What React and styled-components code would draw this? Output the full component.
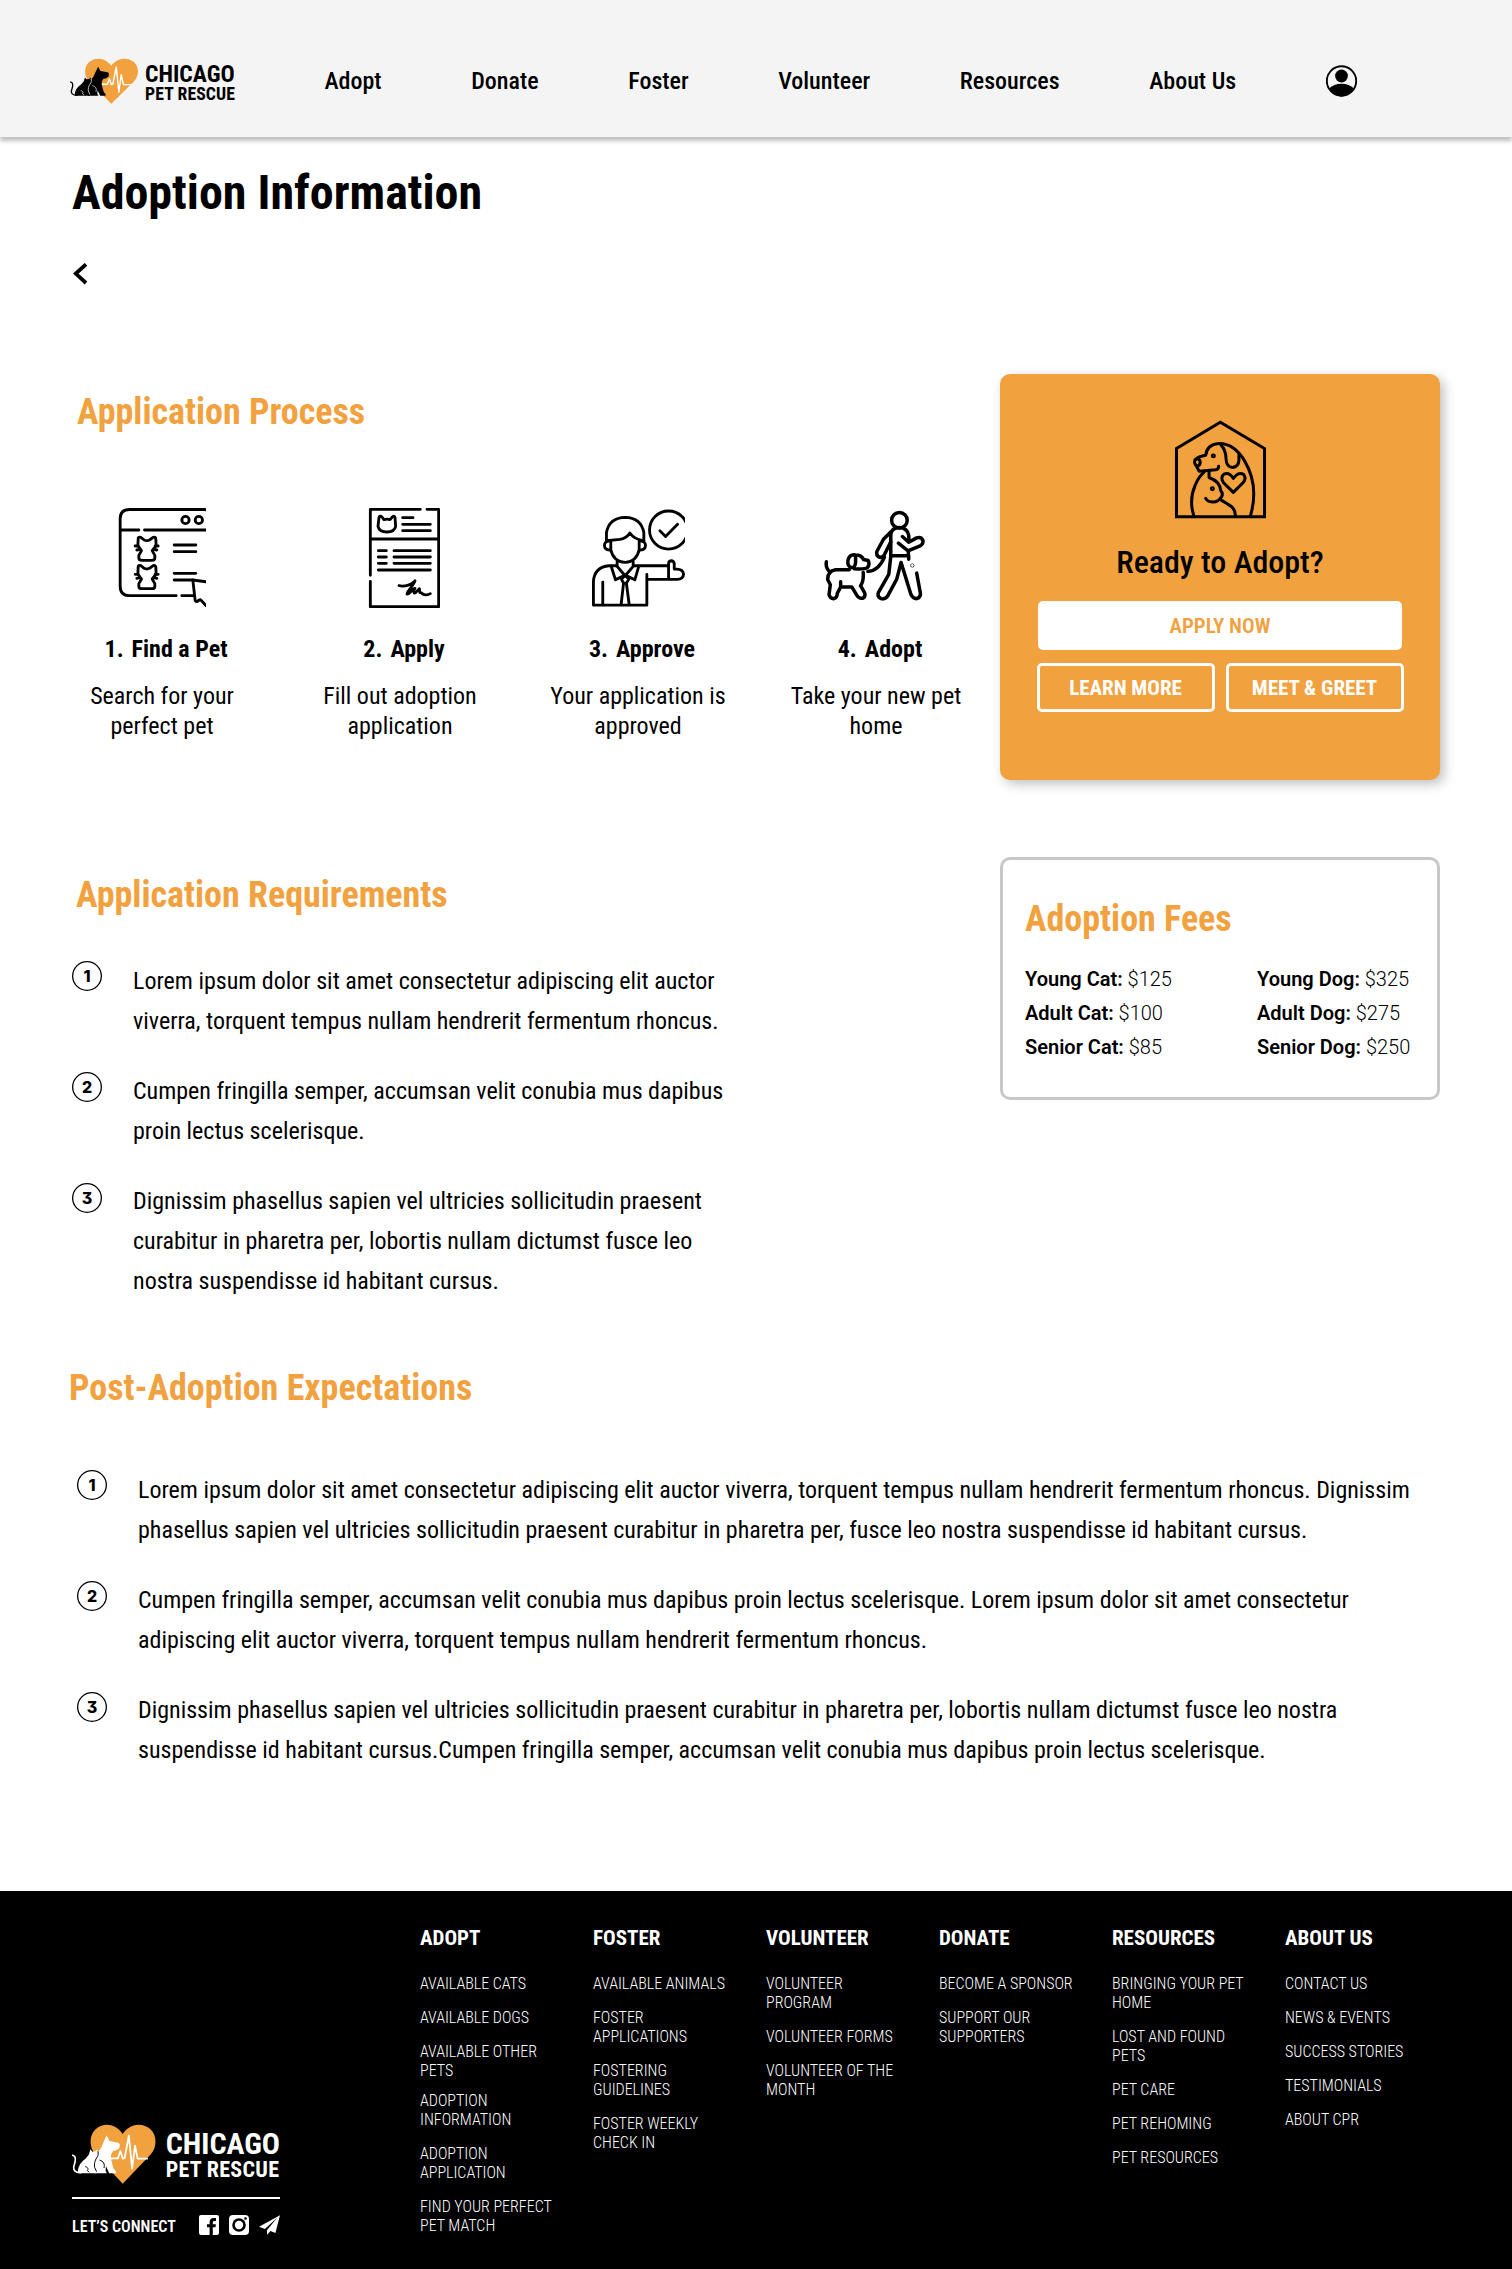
import React from "react";
import styled, { createGlobalStyle } from "styled-components";

const ORANGE = "#f2a13f";

const GlobalStyle = createGlobalStyle`
  * { box-sizing: border-box; }
  body {
    margin: 0;
    background: #fff;
    color: #000;
    font-family: "Roboto Condensed", Roboto, "Liberation Sans", sans-serif;
    font-size: 24px;
    line-height: 28px;
  }
  h1, h2, h3, p, ul { margin: 0; padding: 0; }
  ul { list-style: none; }
  a { color: inherit; text-decoration: none; }
`;

/* ---------- layout ---------- */

const Page = styled.div`
  width: 1512px;
  height: 2269px;
  display: flex;
  flex-direction: column;
`;

const Header = styled.header`
  flex: none;
  height: 137px;
  padding: 25px 0 0 70px;
  display: flex;
  align-items: center;
  background: #f4f4f4;
  box-shadow: 0 4px 4px rgba(0, 0, 0, 0.25);
`;

const Nav = styled.nav`
  display: flex;
  align-items: center;
  gap: 89.6px;
  margin-left: 89.5px;
  font-weight: 500;
  white-space: nowrap;
`;

const Main = styled.main`
  flex: 1;
`;

const PageTitle = styled.h1`
  margin: 27px 0 0 72px;
  font-size: 48px;
  line-height: 57px;
  font-weight: 700;
`;

const BackLink = styled.a`
  display: block;
  width: 16px;
  height: 22px;
  margin: 42px 0 0 73px;
  svg { display: block; }
`;

const Columns = styled.div`
  display: grid;
  grid-template-columns: 1000px 440px;
  margin-top: 89px;
`;

const LeftColumn = styled.div`
  padding-top: 17px;
`;

const SectionTitle = styled.h2`
  margin: ${(p) => p.$top || 0}px 0 0 ${(p) => p.$indent || 0}px;
  color: ${ORANGE};
  font-size: 36px;
  line-height: 42px;
  font-weight: 700;
`;

/* ---------- logo ---------- */

const LogoBox = styled.a`
  width: ${(p) => (p.$large ? 208 : 165)}px;
  display: flex;
  align-items: flex-start;
`;

const LogoWords = styled.span`
  display: flex;
  flex-direction: column;
  font-weight: 700;
  white-space: nowrap;
  margin: ${(p) => (p.$large ? "8px 0 0 10px" : "6px 0 0 7px")};
`;

const LogoTop = styled.span`
  font-size: ${(p) => (p.$large ? 30.1 : 23.6)}px;
  line-height: ${(p) => (p.$large ? 24 : 20)}px;
`;

const LogoBottom = styled.span`
  margin-top: ${(p) => (p.$large ? 3 : 1)}px;
  font-size: ${(p) => (p.$large ? 22 : 17.7)}px;
  line-height: ${(p) => (p.$large ? 22 : 18)}px;
  letter-spacing: ${(p) => (p.$large ? 0.3 : 0.1)}px;
`;

function Logo({ large, ink, gap }) {
  return (
    <LogoBox href="#" $large={large}>
      <svg
        width={large ? 86 : 69}
        height={large ? 60 : 46}
        viewBox="65 130 259 180"
        preserveAspectRatio="none"
        fill="none"
      >
        <path
          d="M222 309 137 221C117 199 118 164 138 146c24-21 61-18 84 14 23-32 61-35 86-14 20 18 21 53 1 75Z"
          fill={ORANGE}
        />
        <path
          d="M178 233h29l8-22 7 23 6-2 13-67 10 99 9-69 8 39h32"
          stroke="#fff"
          strokeWidth="5.500"
          strokeLinejoin="round"
        />
        <path
          d="m172 164 9 17 27 5 5 4-1 12-9 7-11 2-6 11c-2 13 4 28 8 42l7 8-1 6h-20l-10-22-1 14 4 8h-38c-9-10-7-33 3-50 6-13 18-23 22-38Z"
          fill={ink}
        />
        <path
          d="m122 206 6 7 9-1 7-6 2 18-8 10-3 26 5 12-1 6H84c-3-16 7-33 22-43l11-13Z"
          fill={ink}
        />
        <path
          d="M92 276c-18 0-24-8-21-20 3-11 8-21 2-29l-6-3"
          stroke={ink}
          strokeWidth="5"
          strokeLinecap="round"
        />
        <path
          d="M145 212c2 6 2 13-4 20-5 8-8 18-6 28l6 13M106 258c6 0 11 6 7 12l5 5M150 238c13 4 17 12 14 24"
          stroke={gap}
          strokeWidth="3"
        />
      </svg>
      <LogoWords $large={large}>
        <LogoTop $large={large}>CHICAGO</LogoTop>
        <LogoBottom $large={large}>PET RESCUE</LogoBottom>
      </LogoWords>
    </LogoBox>
  );
}

/* ---------- icons ---------- */

const Line = styled.svg`
  display: block;
  flex: none;
  fill: none;
  stroke: #000;
  stroke-width: ${(p) => p.$weight || 8.5};
  stroke-linecap: round;
  stroke-linejoin: round;
`;

const Avatar = styled.svg`
  display: block;
`;

function UserIcon() {
  return (
    <Avatar width="32" height="32" viewBox="0 0 32 32">
      <circle cx="15.500" cy="16" r="14.700" fill="none" stroke="#000" strokeWidth="1.900" />
      <circle cx="15.500" cy="11" r="6.400" />
      <path d="M3.100 23.600C6.100 20.600 10.500 18.700 15.500 18.700s9.400 1.900 12.400 4.900C25.300 28.300 20.700 31.400 15.500 31.400S5.700 28.300 3.100 23.600Z" />
    </Avatar>
  );
}

function BrowseIcon() {
  const cat = (dy) => (
    <g transform={`translate(0 ${dy})`}>
      <path d="M234 508q-1-9 8-6l10 8q8 4 16 0l11-8q8-2 8 6l1 19-12 15 8 14v9q-1 6-8 6h-31q-8 0-9-6v-9l8-14-11-15Z" />
      <path d="M225 528h9M230 540l9-2M294 528h-9M290 540l-9-2" />
    </g>
  );
  return (
    <Line width="88" height="100" viewBox="174 411 263 300">
      <path d="M442 420 432 418.500H208q-28 0-28 28V648q0 29 28 29h140M365 677h37" />
      <path d="M183 480h53M253 480h190" />
      <circle cx="376" cy="450" r="11" />
      <circle cx="416" cy="450" r="11" />
      {cat(0)}
      {cat(85)}
      <path d="M342 525h65M342 545h65M342 610h65M342 630h54" />
      <path d="m442 636-44-6 7 62q5 6 9 0l7-3 20 22" />
    </Line>
  );
}

function FormIcon() {
  return (
    <Line width="72" height="101" viewBox="925 411 216 303">
      <path d="M1082 418H932v198M932 634v76h205V418h-35M932 507h205" />
      <path d="M958 442q2-6 8-2l7 9q9-3 18 0l8-9q6-4 7 3l2 26q-3 17-26 17t-27-17Z" />
      <path d="M1029 443h31M1029 463h83M1029 482h83M956 542h24M1003 542h109M956 561h24M1003 561h109M956 580h24M1003 580h109M956 600h156" />
      <path d="M1018 647c17 4 42-4 48-15-6 16-26 36-24 40 8 1 16-17 24-17-6 9-4 18 2 13l11-12c2 8-1 13 5 12 6 8 20 8 28 3" />
    </Line>
  );
}

function ApproveIcon() {
  return (
    <Line width="94" height="98.500" viewBox="214 88 281 295">
      <path d="M290 258h-22q-44 4-47 47v71h160v-92M249 307v67" />
      <path d="M342 258h104M384 299h88q18-1 19-16-2-15-20-15h-8v-17q-2-8-9-8-8 1-8 9v47" />
      <path d="M273 184v26q8 36 43 38 34-2 42-38v-26" />
      <path d="M260 184v-25q8-45 56-46 48 1 56 46v25" />
      <path d="m260 183 40-4q21-3 30-19 14 20 42 23" />
      <path d="M268 184q-14 1-14 13t16 14M363 184q14 1 14 13t-16 14" />
      <path d="M292 246v14l24 28 24-28v-14M275 262l12 38 29-14 29 14 11-38" />
      <path d="m305 298 11-11 11 11-7 12h-9ZM311 312l-7 62M320 312l8 62" />
      <circle cx="446" cy="151" r="57" />
      <path d="m420 153 17 17 36-36" />
    </Line>
  );
}

function WalkIcon() {
  return (
    <Line width="101" height="91" viewBox="912 90 304 274" $weight={10.5}>
      <circle cx="1139" cy="121" r="23.500" />
      <path d="M1113 228v-64q2-20 26-21 25 2 28 24l1 17M1113 228h54v10" />
      <path d="m1148 170 19 17 24-13q14-5 19 8 1 10-7 15l-38 16-29-23M1166 215v12" />
      <path d="m1113 156-22 22-20 37q-3 12 7 17 10 3 16-8l19-38" />
      <path d="m1113 230-6 54-31 54q-5 13 8 19 12 3 19-7l28-52 13-50 30 97q5 12 17 12 13-4 11-17l-11-60" />
      <circle cx="1178" cy="257" r="1" />
      <path d="M1094 232q-18 42-50 43" />
      <path d="M919 246q-3 20 12 31" />
      <path d="M988 270h-41q-24 3-24 29l8 16-4 30q3 12 14 12 11-2 11-16l10-19h34l15 25q8 12 19 8 8-5 4-16l-12-21q10-14 8-40M962 306v14" />
      <path d="M1007 228v20q-1 17-13 15-12-3-10-21 4-19 22-17 19 1 25 14l14 3q6 11-2 21-6 6-40 4" />
    </Line>
  );
}

function HouseIcon() {
  return (
    <Line width="93" height="99" viewBox="582 180 279 298" $weight={9}>
      <path d="m589 266 132-79 133 79v205H589Z" strokeLinejoin="miter" />
      <path d="M641 467q-15-46 4-90 10-25 27-40" />
      <path d="M645 299q10-9 32-13 4-32 39-35 46-1 78 52 44 74 18 164" />
      <path d="M652 297q-11 3-8 13 3 10 10 8 8-4 6-14-2-7-8-7M648 317l9 17 50-4q9-2 9-11" />
      <path d="M722 254q16 16 16 42 1 26 20 27 18-2 19-22v-17" />
      <circle cx="700" cy="288" r="3" />
      <circle cx="697" cy="387" r="3" />
      <path d="M687 334v19q33 12 35 39 9 10 2 20-9 16-27 15-15-1-20-11M725 422l18 11q24 12 23 34" />
      <path d="m760 398-30-30q-10-16 2-25 16-7 28 13 14-20 30-13 11 11 0 25Z" />
    </Line>
  );
}

/* ---------- process steps ---------- */

const Steps = styled.div`
  display: grid;
  grid-template-columns: repeat(4, 238px);
  margin: 74px 0 0 43px;
`;

const Step = styled.div`
  display: flex;
  flex-direction: column;
  align-items: center;
  text-align: center;
`;

const StepArt = styled.div`
  height: 128px;
  padding: ${(p) => p.$pad || 0};
`;

const StepTitle = styled.h3`
  display: flex;
  gap: 8px;
  padding-left: 8px;
  font-size: 24px;
  font-weight: 700;
`;

const StepText = styled.p`
  width: 190px;
  margin-top: 18px;
  line-height: 30px;
`;

/* ---------- numbered list ---------- */

const Numbered = styled.div`
  display: grid;
  grid-template-columns: 30px ${(p) => p.$width}px;
  column-gap: 31px;
  margin: ${(p) => p.$margin};
`;

const Markers = styled.div`
  display: flex;
  flex-direction: column;
  gap: 81px;
`;

const Marker = styled.span`
  width: 30px;
  height: 30px;
  border-radius: 50%;
  box-shadow: inset 0 0 0 1.3px #000;
  display: flex;
  align-items: center;
  justify-content: center;
  font-family: Inter, sans-serif;
  font-feature-settings: "cv09";
  font-size: 16px;
  line-height: 20px;
  font-weight: 800;
`;

const Items = styled.div`
  display: flex;
  flex-direction: column;
  gap: 30px;
  line-height: 40px;
`;

function NumberedList({ items, ...rest }) {
  return (
    <Numbered {...rest}>
      <Markers>
        {items.map((_, i) => (
          <Marker key={i}>{i + 1}</Marker>
        ))}
      </Markers>
      <Items>
        {items.map((t) => (
          <p key={t}>{t}</p>
        ))}
      </Items>
    </Numbered>
  );
}

/* ---------- sidebar ---------- */

const AdoptCard = styled.aside`
  height: 406px;
  padding: 46px 37px 0;
  border-radius: 10px;
  background: ${ORANGE};
  box-shadow: 4px 4px 12px rgba(0, 0, 0, 0.25);
  display: flex;
  flex-direction: column;
  align-items: center;
`;

const CardTitle = styled.h3`
  margin: 24px 0 20px;
  font-size: 32px;
  line-height: 38px;
  font-weight: 500;
`;

const Button = styled.button`
  height: 49px;
  padding: 0;
  border: 3px solid #fff;
  border-radius: 5px;
  background: ${(p) => (p.$solid ? "#fff" : "transparent")};
  color: ${(p) => (p.$solid ? ORANGE : "#fff")};
  font: ${(p) => (p.$solid ? 600 : 700)} 21px/24px "Roboto Condensed", Roboto, sans-serif;
  width: ${(p) => (p.$solid ? "364px" : "auto")};
`;

const ButtonRow = styled.div`
  width: 367px;
  margin-top: 13px;
  display: grid;
  grid-template-columns: 1fr 1fr;
  gap: 11px;
`;

const Fees = styled.aside`
  height: 243px;
  margin-top: 77px;
  padding: 38px 22px 0;
  border: 3px solid #c8c8c8;
  border-radius: 10px;
`;

const FeeGrid = styled.div`
  display: grid;
  grid-template-columns: 232px auto;
  margin-top: 22px;
  font-family: Roboto, sans-serif;
  font-size: 20px;
  line-height: 34px;
  font-weight: 300;
  white-space: nowrap;
  b { font-weight: 600; }
`;

/* ---------- footer ---------- */

const Footer = styled.footer`
  flex: none;
  height: 378px;
  display: flex;
  background: #000;
  color: #fff;
`;

const Brand = styled.div`
  width: 420px;
  padding: 0 0 34px 72px;
  display: flex;
  flex-direction: column;
  justify-content: flex-end;
`;

const Connect = styled.div`
  width: 208px;
  margin-top: 13px;
  padding-top: 16px;
  border-top: 2px solid #fff;
  display: flex;
  align-items: center;
  justify-content: space-between;
  font-size: 16px;
  line-height: 20px;
  font-weight: 600;
`;

const ConnectLabel = styled.span`
  padding-top: 3px;
  line-height: 17px;
`;

const Social = styled.div`
  display: flex;
  gap: 10px;
  svg { display: block; }
`;

const FooterColumns = styled.div`
  display: grid;
  grid-template-columns: repeat(6, 173px);
  padding-top: 35px;
`;

const FooterTitle = styled.h3`
  margin-bottom: 24px;
  font-size: 21px;
  line-height: 24px;
  font-weight: 700;
`;

const FooterLinks = styled.ul`
  width: 138px;
  font-size: 16px;
  line-height: 19px;
  font-weight: 300;
`;

const FooterLink = styled.li`
  margin-bottom: ${(p) => (p.$tight ? 11 : 15)}px;
`;

/* ---------- content ---------- */

const navItems = ["Adopt", "Donate", "Foster", "Volunteer", "Resources", "About Us"];

const steps = [
  { title: "Find a Pet", text: "Search for your perfect pet", icon: <BrowseIcon />, pad: "0 1px 0 0" },
  { title: "Apply", text: "Fill out adoption application", icon: <FormIcon />, pad: "0 0 0 7px" },
  { title: "Approve", text: "Your application is approved", icon: <ApproveIcon />, pad: "2px 0 0" },
  { title: "Adopt", text: "Take your new pet home", icon: <WalkIcon />, pad: "3px 3px 0 0" },
];

const requirements = [
  "Lorem ipsum dolor sit amet consectetur adipiscing elit auctor viverra, torquent tempus nullam hendrerit fermentum rhoncus.",
  "Cumpen fringilla semper, accumsan velit conubia mus dapibus proin lectus scelerisque.",
  "Dignissim phasellus sapien vel ultricies sollicitudin praesent curabitur in pharetra per, lobortis nullam dictumst fusce leo nostra suspendisse id habitant cursus.",
];

const expectations = [
  "Lorem ipsum dolor sit amet consectetur adipiscing elit auctor viverra, torquent tempus nullam hendrerit fermentum rhoncus. Dignissim phasellus sapien vel ultricies sollicitudin praesent curabitur in pharetra per, fusce leo nostra suspendisse id habitant cursus.",
  "Cumpen fringilla semper, accumsan velit conubia mus dapibus proin lectus scelerisque. Lorem ipsum dolor sit amet consectetur adipiscing elit auctor viverra, torquent tempus nullam hendrerit fermentum rhoncus.",
  "Dignissim phasellus sapien vel ultricies sollicitudin praesent curabitur in pharetra per, lobortis nullam dictumst fusce leo nostra suspendisse id habitant cursus.Cumpen fringilla semper, accumsan velit conubia mus dapibus proin lectus scelerisque.",
];

const fees = [
  ["Young Cat:", "$125"],
  ["Young Dog:", "$325"],
  ["Adult Cat:", "$100"],
  ["Adult Dog:", "$275"],
  ["Senior Cat:", "$85"],
  ["Senior Dog:", "$250"],
];

const footerColumns = [
  ["ADOPT", ["AVAILABLE CATS", "AVAILABLE DOGS", "AVAILABLE OTHER PETS", "ADOPTION INFORMATION", "ADOPTION APPLICATION", "FIND YOUR PERFECT PET MATCH"]],
  ["FOSTER", ["AVAILABLE ANIMALS", "FOSTER APPLICATIONS", "FOSTERING GUIDELINES", "FOSTER WEEKLY CHECK IN"]],
  ["VOLUNTEER", ["VOLUNTEER PROGRAM", "VOLUNTEER FORMS", "VOLUNTEER OF THE MONTH"]],
  ["DONATE", ["BECOME A SPONSOR", "SUPPORT OUR SUPPORTERS"]],
  ["RESOURCES", ["BRINGING YOUR PET HOME", "LOST AND FOUND PETS", "PET CARE", "PET REHOMING", "PET RESOURCES"]],
  ["ABOUT US", ["CONTACT US", "NEWS & EVENTS", "SUCCESS STORIES", "TESTIMONIALS", "ABOUT CPR"]],
];

export default function App() {
  return (
    <Page>
      <GlobalStyle />
      <Header>
        <Logo ink="#000" gap="#f4f4f4" />
        <Nav>
          {navItems.map((item) => (
            <a key={item} href="#">{item}</a>
          ))}
          <UserIcon />
        </Nav>
      </Header>

      <Main>
        <PageTitle>Adoption Information</PageTitle>
        <BackLink href="#" aria-label="Back">
          <svg width="16" height="22" viewBox="0 0 16 22">
            <path d="M13 1.300 2.800 10.600 13 20" fill="none" stroke="#000" strokeWidth="3.800" />
          </svg>
        </BackLink>

        <Columns>
          <LeftColumn>
            <SectionTitle $indent={77}>Application Process</SectionTitle>
            <Steps>
              {steps.map((s, i) => (
                <Step key={s.title}>
                  <StepArt $pad={s.pad}>{s.icon}</StepArt>
                  <StepTitle>
                    <span>{i + 1}.</span>
                    <span>{s.title}</span>
                  </StepTitle>
                  <StepText>{s.text}</StepText>
                </Step>
              ))}
            </Steps>
            <SectionTitle $indent={76} $top={133}>Application Requirements</SectionTitle>
            <NumberedList items={requirements} $width={600} $margin="45px 0 0 72px" />
          </LeftColumn>

          <div>
            <AdoptCard>
              <HouseIcon />
              <CardTitle>Ready to Adopt?</CardTitle>
              <Button $solid>APPLY NOW</Button>
              <ButtonRow>
                <Button>LEARN MORE</Button>
                <Button>MEET &amp; GREET</Button>
              </ButtonRow>
            </AdoptCard>
            <Fees>
              <SectionTitle>Adoption Fees</SectionTitle>
              <FeeGrid>
                {fees.map(([label, price]) => (
                  <span key={label}><b>{label}</b> {price}</span>
                ))}
              </FeeGrid>
            </Fees>
          </div>
        </Columns>

        <SectionTitle $indent={69} $top={66}>Post-Adoption Expectations</SectionTitle>
        <NumberedList items={expectations} $width={1290} $margin="61px 0 0 77px" />
      </Main>

      <Footer>
        <Brand>
          <Logo large ink="#fff" gap="#000" />
          <Connect>
            <ConnectLabel>LET’S CONNECT</ConnectLabel>
            <Social>
              <svg width="20" height="20" viewBox="0 0 20 20" fill="#fff">
                <path d="M2 0h16a2 2 0 0 1 2 2v16a2 2 0 0 1-2 2h-4.200v-7.700h2.700l.4-3h-3.100V7.400c0-.9.300-1.500 1.600-1.500H17V3.200c-.3 0-1.300-.1-2.400-.1-2.400 0-4 1.400-4 4.100v2.100H8v3h2.600V20H2a2 2 0 0 1-2-2V2a2 2 0 0 1 2-2Z" />
              </svg>
              <svg width="20" height="20" viewBox="0 0 20 20" fill="#fff">
                <rect width="20" height="20" rx="4" />
                <circle cx="10" cy="10" r="6.800" fill="#000" />
                <circle cx="10" cy="10" r="4.200" />
                <circle cx="16.500" cy="3.500" r="1.300" fill="#000" />
              </svg>
              <svg width="21" height="20" viewBox="627 405 64 60" fill="#fff">
                <path d="m691 405-64 35 18 7 38-35-32 39 1 14 10-12 15 6Z" />
              </svg>
            </Social>
          </Connect>
        </Brand>
        <FooterColumns>
          {footerColumns.map(([title, links]) => (
            <div key={title}>
              <FooterTitle>{title}</FooterTitle>
              <FooterLinks>
                {links.map((l) => (
                  <FooterLink key={l} $tight={l === "AVAILABLE OTHER PETS"}>
                    <a href="#">{l}</a>
                  </FooterLink>
                ))}
              </FooterLinks>
            </div>
          ))}
        </FooterColumns>
      </Footer>
    </Page>
  );
}
